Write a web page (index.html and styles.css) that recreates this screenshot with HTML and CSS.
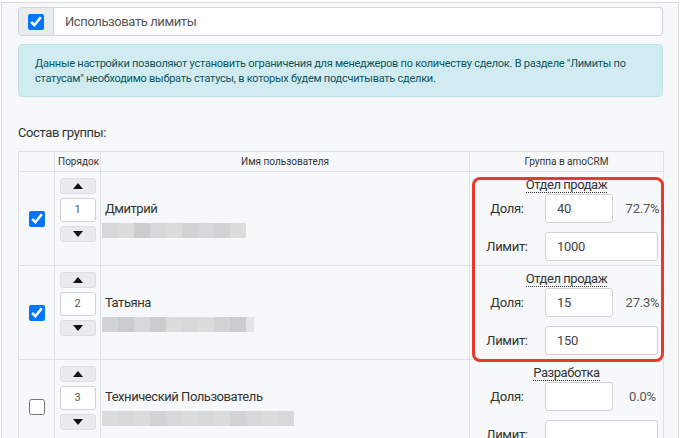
FILE: index.html
```html
<!DOCTYPE html>
<html lang="ru">
<head>
<meta charset="utf-8">
<link rel="stylesheet" href="styles.css">
</head>
<body>
<div class="panel">
  <div class="input-group">
    <label class="addon"><input type="checkbox" class="cb" checked></label>
    <div class="ig-field">Использовать лимиты</div>
  </div>

  <div class="alert">Данные настройки позволяют установить ограничения для менеджеров по количеству сделок. В разделе "Лимиты по статусам" необходимо выбрать статусы, в которых будем подсчитывать сделки.</div>

  <div class="section-title">Состав группы:</div>

  <div class="table-wrap">
    <table class="users">
      <colgroup>
        <col class="c-check"><col class="c-order"><col class="c-name"><col class="c-group">
      </colgroup>
      <thead>
        <tr><th></th><th class="th-order">Порядок</th><th>Имя пользователя</th><th>Группа в amoCRM</th></tr>
      </thead>
      <tbody>
        <tr>
          <td class="td-check"><input type="checkbox" class="cb" checked></td>
          <td class="td-order">
            <div class="order">
              <button class="arrow"><svg width="10" height="6" viewBox="0 0 10 6"><polygon points="0,6 10,6 5,0" fill="#111"/></svg></button>
              <div class="order-num">1</div>
              <button class="arrow"><svg width="10" height="6" viewBox="0 0 10 6"><polygon points="0,0 10,0 5,6" fill="#111"/></svg></button>
            </div>
          </td>
          <td class="td-name">
            <div class="uname">Дмитрий</div>
            <div class="blur">
              <span class="b2"></span><span class="b1"></span><span class="b4"></span><span class="b2"></span><span class="b1"></span><span class="b3"></span><span class="b2"></span><span class="b3"></span><span class="b1"></span>
            </div>
          </td>
          <td class="td-group">
            <div class="g-title"><span>Отдел продаж</span></div>
            <div class="g-grid">
              <span class="g-label">Доля:</span><div class="g-input g-share">40</div><span class="g-pct">72.7%</span>
              <span class="g-label">Лимит:</span><div class="g-input g-limit">1000</div>
            </div>
          </td>
        </tr>
        <tr>
          <td class="td-check"><input type="checkbox" class="cb" checked></td>
          <td class="td-order">
            <div class="order">
              <button class="arrow"><svg width="10" height="6" viewBox="0 0 10 6"><polygon points="0,6 10,6 5,0" fill="#111"/></svg></button>
              <div class="order-num">2</div>
              <button class="arrow"><svg width="10" height="6" viewBox="0 0 10 6"><polygon points="0,0 10,0 5,6" fill="#111"/></svg></button>
            </div>
          </td>
          <td class="td-name">
            <div class="uname">Татьяна</div>
            <div class="blur">
              <span class="b3"></span><span class="b4"></span><span class="b2"></span><span class="b4"></span><span class="b1"></span><span class="b2"></span><span class="b1"></span><span class="b3"></span><span class="b4"></span><span class="b0 half"></span>
            </div>
          </td>
          <td class="td-group">
            <div class="g-title"><span>Отдел продаж</span></div>
            <div class="g-grid">
              <span class="g-label">Доля:</span><div class="g-input g-share">15</div><span class="g-pct">27.3%</span>
              <span class="g-label">Лимит:</span><div class="g-input g-limit">150</div>
            </div>
          </td>
        </tr>
        <tr>
          <td class="td-check"><input type="checkbox" class="cb"></td>
          <td class="td-order">
            <div class="order">
              <button class="arrow"><svg width="10" height="6" viewBox="0 0 10 6"><polygon points="0,6 10,6 5,0" fill="#111"/></svg></button>
              <div class="order-num">3</div>
              <button class="arrow"><svg width="10" height="6" viewBox="0 0 10 6"><polygon points="0,0 10,0 5,6" fill="#111"/></svg></button>
            </div>
          </td>
          <td class="td-name">
            <div class="uname">Технический Пользователь</div>
            <div class="blur">
              <span class="b1"></span><span class="b2"></span><span class="b1"></span><span class="b3"></span><span class="b2"></span><span class="b1"></span><span class="b2"></span><span class="b1"></span><span class="b3"></span><span class="b2"></span><span class="b1"></span><span class="b2"></span>
            </div>
          </td>
          <td class="td-group">
            <div class="g-title"><span>Разработка</span></div>
            <div class="g-grid">
              <span class="g-label">Доля:</span><div class="g-input g-share"></div><span class="g-pct">0.0%</span>
              <span class="g-label">Лимит:</span><div class="g-input g-limit"></div>
            </div>
          </td>
        </tr>
      </tbody>
    </table>
    <div class="highlight"></div>
  </div>
</div>
</body>
</html>
```

FILE: styles.css
```css
* { box-sizing: border-box; }
html, body { margin: 0; padding: 0; }
body {
  background: #ffffff;
  font-family: Roboto, "Noto Sans", sans-serif;
  color: #333;
  overflow: hidden;
  height: 438px;
}
.panel {
  margin: 2px 1px 0 1px;
  border: 1px solid #dcdde0;
  border-bottom: none;
  background: #f7f8fa;
  padding: 4px 15px 40px 16px;
}
.input-group {
  display: flex;
  height: 29px;
}
.addon {
  width: 36px;
  background: #e9ecef;
  border: 1px solid #ced4da;
  border-radius: 4px 0 0 4px;
  display: flex;
  align-items: center;
  justify-content: center;
}
.cb {
  width: 16px;
  height: 16px;
  margin: 0;
}
.ig-field {
  flex: 1;
  background: #fff;
  border: 1px solid #ced4da;
  border-left: none;
  border-radius: 0 4px 4px 0;
  font-size: 13px;
  letter-spacing: -0.4px;
  line-height: 27px;
  padding-left: 11px;
  color: #555;
}
.alert {
  margin-top: 8px;
  background: #d1ecf1;
  border: 1px solid #bee5eb;
  border-radius: 4px;
  color: #0c5460;
  font-size: 11px;
  letter-spacing: -0.25px;
  line-height: 15px;
  padding: 11px 16px 10px 16px;
}
.section-title {
  margin-top: 26px;
  font-size: 13px;
  letter-spacing: -0.4px;
  line-height: 20px;
  color: #333;
}
.table-wrap {
  position: relative;
  margin-top: 8px;
}
.users {
  border-collapse: collapse;
  width: 645px;
  table-layout: fixed;
}
.c-check { width: 36px; }
.c-order { width: 46px; }
.c-name { width: 369px; }
.c-group { width: 194px; }
.users th, .users td {
  border: 1px solid #dee2e6;
  padding: 0;
}
.users th {
  font-size: 10px;
  font-weight: normal;
  height: 20px;
  color: #333;
  text-align: center;
}
.users th.th-order { text-align: left; padding-left: 3px; }
.td-check { text-align: center; vertical-align: middle; }
.td-check .cb { display: block; margin: 0 auto; }
.td-order { vertical-align: top; padding-top: 6px !important; }
.order {
  width: 36px;
  margin: 0 auto;
  display: flex;
  flex-direction: column;
  gap: 4px;
}
.arrow {
  height: 16px;
  width: 36px;
  padding: 0;
  margin: 0;
  background: #e9ecef;
  border: 1px solid #dcdfe3;
  border-radius: 3px;
  display: flex;
  align-items: center;
  justify-content: center;
}
.order-num {
  height: 24px;
  background: #fff;
  border: 1px solid #cfd3d8;
  border-radius: 3px;
  font-size: 11px;
  line-height: 22px;
  text-align: center;
  color: #555;
}
.td-name { vertical-align: middle; padding-left: 1px !important; }
.uname {
  font-size: 13px;
  letter-spacing: -0.45px;
  line-height: 18px;
  padding-left: 3px;
  color: #333;
}
.blur {
  display: flex;
  margin-top: 5px;
  height: 15px;
}
.blur span { width: 16px; height: 15px; }
.blur .half { width: 8px; }
.b0 { background: #e3e4e5; }
.b1 { background: #dcdcdd; }
.b2 { background: #d7d8d9; }
.b3 { background: #d2d3d4; }
.b4 { background: #cbcccd; }
.td-group { vertical-align: top; padding: 5px 0 4px 3px !important; }
.g-title {
  text-align: center;
  font-size: 13px;
  letter-spacing: -0.45px;
  line-height: 16px;
  height: 17px;
  padding-right: 3px;
}
.g-title span { border-bottom: 1px dotted #333; }
.g-grid {
  display: grid;
  grid-template-columns: 68px 68px 51px;
  column-gap: 4px;
  row-gap: 9px;
  align-items: center;
  margin-top: 0;
}
.g-label {
  text-align: center;
  font-size: 13px;
  letter-spacing: -0.3px;
  color: #333;
}
.g-input {
  height: 29px;
  background: #fff;
  border: 1px solid #cfd3d8;
  border-radius: 3px;
  font-size: 13px;
  letter-spacing: -0.3px;
  line-height: 27px;
  padding-left: 11px;
  color: #444;
}
.g-limit { grid-column: 2 / 4; width: 113px; }
.g-pct {
  text-align: center;
  font-size: 13px;
  letter-spacing: -0.2px;
  color: #555;
}
.highlight {
  position: absolute;
  left: 454px;
  top: 26px;
  width: 192px;
  height: 185px;
  border: 3px solid #e63a2e;
  border-radius: 8px;
  pointer-events: none;
}
```
